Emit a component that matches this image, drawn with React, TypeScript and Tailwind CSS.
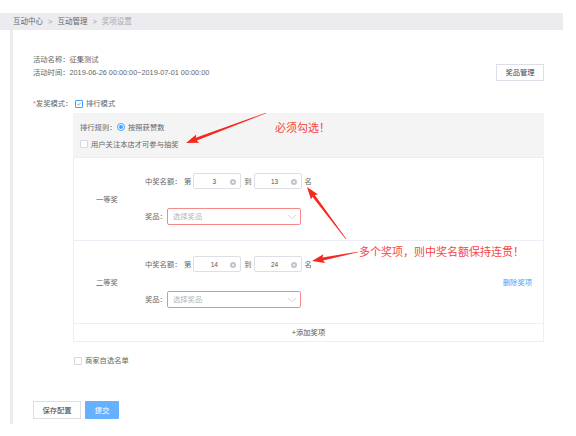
import React from "react";

// --------------------
// Small pieces
// --------------------
function Check({ checked = false }: { checked?: boolean }) {
  return (
    <span
      className={
        "w-[8px] h-[8px] shrink-0 rounded-[1px] border bg-white flex items-center justify-center " +
        (checked ? "border-[#409eff]" : "border-[#d4d7de]")
      }
    >
      {checked && (
        <svg width="6" height="6" viewBox="0 0 6 6">
          <path d="M1.2 3.1 L2.5 4.3 L4.9 1.6" fill="none" stroke="#409eff" strokeWidth="0.8" />
        </svg>
      )}
    </span>
  );
}

function Radio() {
  return (
    <span className="w-[8px] h-[8px] shrink-0 rounded-full border border-[#409eff] bg-white flex items-center justify-center">
      <span className="w-[4px] h-[4px] rounded-full bg-[#409eff]" />
    </span>
  );
}

function NumInput({ value }: { value: string }) {
  return (
    <span className="relative w-[48px] h-[16px] shrink-0 border border-[#dcdfe6] rounded-[2px] bg-white flex items-center">
      <span className="flex-1 text-center pr-[6px] text-[6.5px] text-[#555]">{value}</span>
      <span className="absolute right-[4px] top-[4.5px] w-[6px] h-[6px] rounded-full bg-[#c0c4cc] flex items-center justify-center">
        <svg width="4" height="4" viewBox="0 0 4 4">
          <path d="M1 1 L3 3 M3 1 L1 3" stroke="#fff" strokeWidth="0.7" />
        </svg>
      </span>
    </span>
  );
}

function PrizeSelect() {
  return (
    <span className="w-[134px] h-[17px] shrink-0 border border-[#f78989] rounded-[2px] bg-white flex items-center justify-between pl-[5px] pr-[3px]">
      <span className="text-[#b4b4b4]">选择奖品</span>
      <svg width="10" height="6" viewBox="0 0 10 6">
        <path d="M1 1 L5 4.6 L9 1" fill="none" stroke="#c8c8c8" strokeWidth="0.7" />
      </svg>
    </span>
  );
}

type Prize = { name: string; from: string; to: string; removable: boolean };

const prizes: Prize[] = [
  { name: "一等奖", from: "3", to: "13", removable: false },
  { name: "二等奖", from: "14", to: "24", removable: true },
];

// tapered annotation arrow: thin tail, thick shaft near the head
function arrowPoints(x1: number, y1: number, x2: number, y2: number) {
  const dx = x2 - x1;
  const dy = y2 - y1;
  const len = Math.hypot(dx, dy);
  const ux = dx / len;
  const uy = dy / len;
  const nx = -uy;
  const ny = ux;
  const head = 11;
  const bx = x2 - ux * head;
  const by = y2 - uy * head;
  const shaft = 1.5;
  const barb = 4.4;
  const tail = 0.3;
  const pts = [
    [x1 + nx * tail, y1 + ny * tail],
    [bx + nx * shaft, by + ny * shaft],
    [bx + nx * barb - ux * 1.5, by + ny * barb - uy * 1.5],
    [x2, y2],
    [bx - nx * barb - ux * 1.5, by - ny * barb - uy * 1.5],
    [bx - nx * shaft, by - ny * shaft],
    [x1 - nx * tail, y1 - ny * tail],
  ];
  return pts.map((p) => p[0].toFixed(1) + "," + p[1].toFixed(1)).join(" ");
}

// --------------------
// Page
// --------------------
export default function App() {
  return (
    <div
      className="relative w-[576px] h-[436px] bg-white overflow-hidden text-[7.3px] leading-[13px] text-[#666]"
      style={{ fontFamily: '"Liberation Sans", "Noto Sans CJK SC", sans-serif' }}
    >
      <div className="pt-[13px]">
        {/* Breadcrumb */}
        <div className="h-[17px] w-[563px] bg-[#ebebf0] flex items-center pl-[13px] text-[7.5px]">
          <span className="text-[#666]">互动中心</span>
          <span className="mx-[5px] text-[#999]">&gt;</span>
          <span className="text-[#666]">互动管理</span>
          <span className="mx-[5px] text-[#999]">&gt;</span>
          <span className="text-[#aaa]">奖项设置</span>
        </div>

        <div className="ml-[10px] w-[553px] border-l-[3px] border-[#ebebf0] pl-[20px] pr-[19px] pb-[5px]">
          {/* Activity info */}
          <div className="pt-[23px] flex items-start justify-between">
            <div>
              <p>活动名称：征集测试</p>
              <p>活动时间：2019-06-26 00:00:00~2019-07-01 00:00:00</p>
            </div>
            <button className="mt-[11px] w-[48px] h-[17px] border border-[#dcdfe6] bg-white text-[#444] text-[7.3px]">
              奖品管理
            </button>
          </div>

          {/* Mode */}
          <div className="mt-[16px] flex items-center h-[13px]">
            <span className="w-[40px] shrink-0 whitespace-nowrap">
              <span className="text-[#f56c6c]">*</span>发奖模式：
            </span>
            <span className="ml-[2px] flex items-center gap-[3px]">
              <Check checked />
              <span>排行模式</span>
            </span>
          </div>

          <div className="ml-[40px] mt-[3px]">
            {/* Rule panel */}
            <div className="bg-[#f4f4f5] px-[7px] pt-[7.5px] pb-[6.5px] flex flex-col gap-[4px]">
              <div className="flex items-center h-[13px]">
                <span className="w-[37px] shrink-0 whitespace-nowrap">排行规则：</span>
                <Radio />
                <span className="ml-[3px]">按照获赞数</span>
              </div>
              <div className="flex items-center h-[13px] gap-[3px]">
                <Check />
                <span>用户关注本店才可参与抽奖</span>
              </div>
            </div>

            {/* Prize list */}
            <div className="border border-[#ebeef5]">
              {prizes.map((p) => (
                <div key={p.name} className="h-[83px] flex items-center border-b border-[#ebeef5]">
                  <span className="w-[71px] shrink-0 pl-[22px]">{p.name}</span>
                  <div className="flex-1 flex flex-col">
                    <div className="h-[16px] flex items-center">
                      <span className="w-[39px] shrink-0 whitespace-nowrap">中奖名额：</span>
                      <span>第</span>
                      <span className="ml-[2px]">
                        <NumInput value={p.from} />
                      </span>
                      <span className="ml-[3px]">到</span>
                      <span className="ml-[2px]">
                        <NumInput value={p.to} />
                      </span>
                      <span className="ml-[3px]">名</span>
                    </div>
                    <div className="mt-[19px] h-[17px] flex items-center">
                      <span className="w-[22px] shrink-0 whitespace-nowrap">奖品：</span>
                      <PrizeSelect />
                    </div>
                  </div>
                  {p.removable && <span className="pr-[11px] text-[#409eff]">删除奖项</span>}
                </div>
              ))}
              <div className="h-[17px] flex items-center justify-center text-[#555]">+添加奖项</div>
            </div>

            {/* Merchant list */}
            <div className="mt-[12px] h-[13px] flex items-center gap-[3px] pl-[1px]">
              <Check />
              <span>商家自选名单</span>
            </div>
          </div>

          {/* Actions */}
          <div className="mt-[34px] flex gap-[4px]">
            <button className="w-[48px] h-[18px] border border-[#dcdfe6] bg-white text-[#444] text-[7.3px]">
              保存配置
            </button>
            <button className="w-[34px] h-[18px] bg-[#66b1ff] text-white text-[7.3px] rounded-[1px]">
              提交
            </button>
          </div>
        </div>
      </div>

      {/* Red annotations over the page */}
      <svg className="absolute inset-0 pointer-events-none" width="576" height="436">
        <polygon points={arrowPoints(266, 113, 186, 143)} fill="#f5281e" />
        <polygon points={arrowPoints(346, 239, 307, 187)} fill="#f5281e" />
        <polygon points={arrowPoints(358, 252, 312, 261)} fill="#f5281e" />
      </svg>
      <span className="absolute left-[275px] top-[121px] text-[11px] leading-[14px] text-[#f5463f] whitespace-nowrap">
        必须勾选！
      </span>
      <span className="absolute left-[359px] top-[245px] text-[11px] leading-[14px] text-[#f5463f] whitespace-nowrap">
        多个奖项，则中奖名额保持连贯！
      </span>
    </div>
  );
}
